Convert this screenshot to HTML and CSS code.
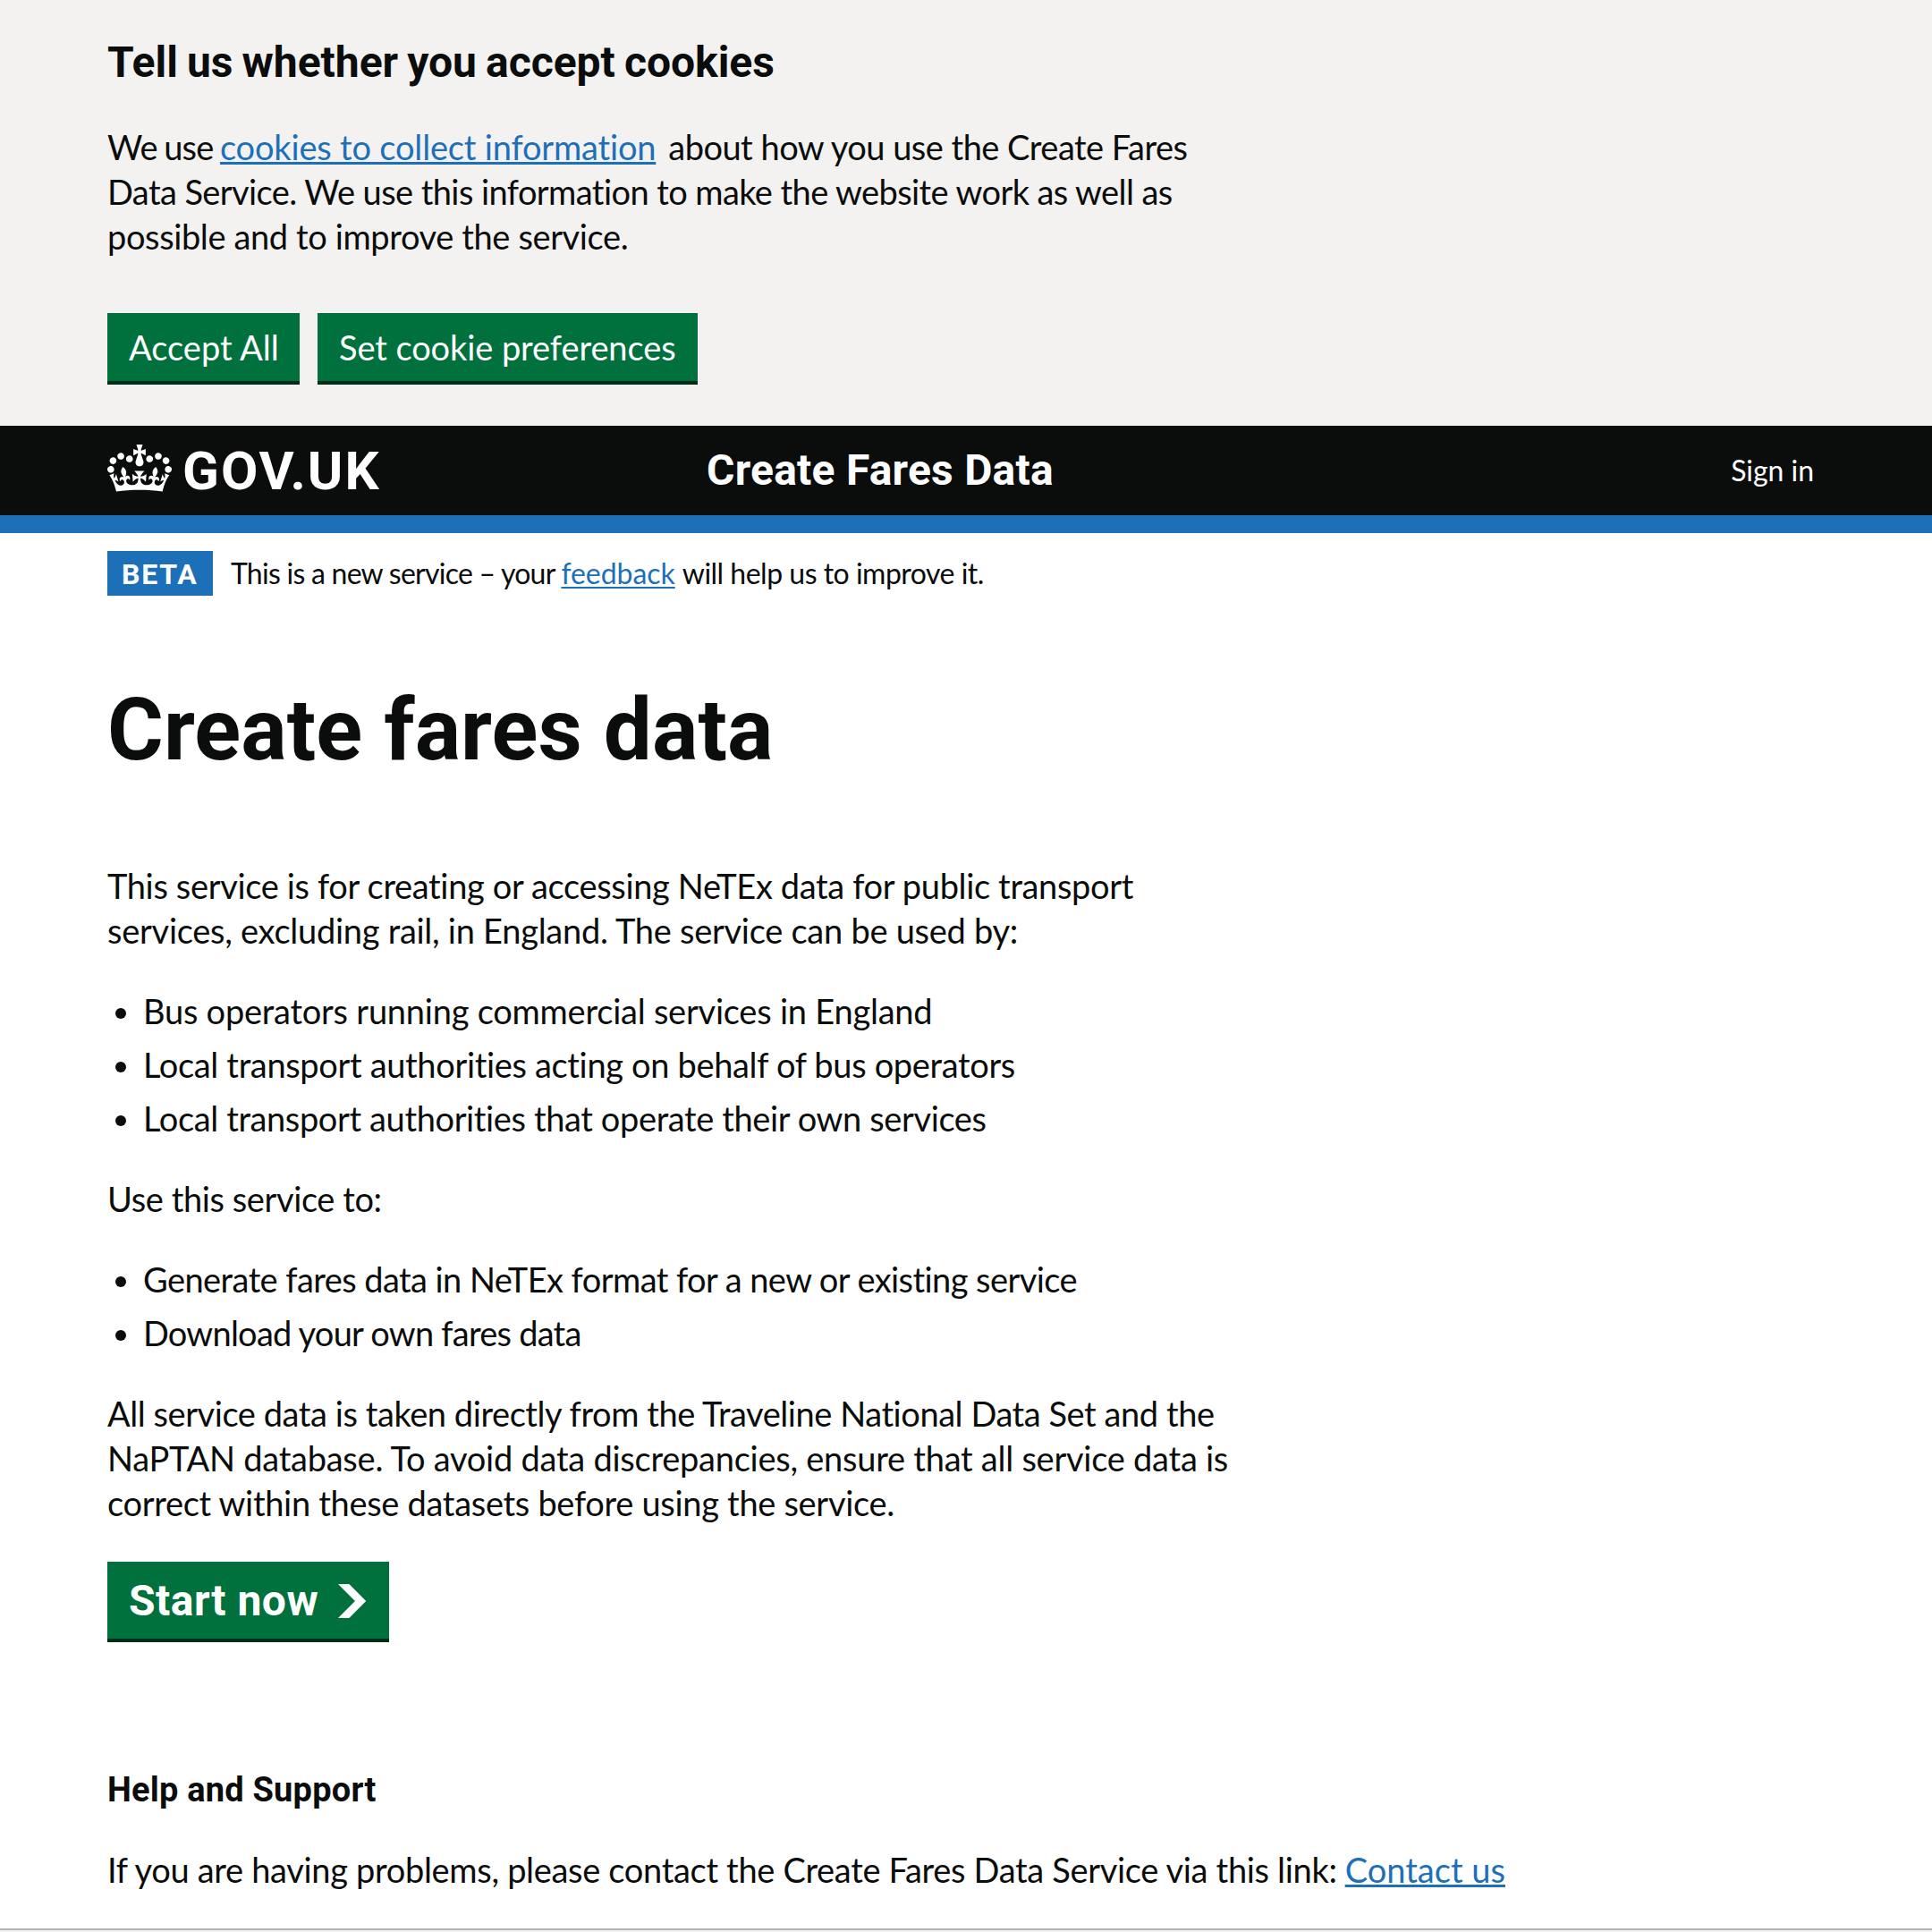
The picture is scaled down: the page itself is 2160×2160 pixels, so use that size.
FILE: index.html
```html
<!DOCTYPE html>
<html lang="en">
<head>
<meta charset="utf-8">
<title>Create Fares Data</title>
<link rel="stylesheet" href="styles.css">
</head>
<body>
<section class="cookie-banner">
  <h2 class="cookie-title">Tell us whether you accept cookies</h2>
  <p class="body cookie-text"><span class="line"><span class="t-we">We use </span><a class="link t-cookies" href="#">cookies to collect information</a><span class="t-about">about how you use the Create Fares</span></span>
    <span class="line t-data">Data Service. We use this information to make the website work as well as</span>
    <span class="line t-possible">possible and to improve the service.</span></p>
  <div class="cookie-actions">
    <button class="button t-accept">Accept All</button>
    <button class="button button-wide t-set">Set cookie preferences</button>
  </div>
</section>

<header class="header">
  <a class="logo" href="#">
    <svg class="crown" viewBox="0 0 132 97" width="72" height="53" aria-hidden="true"><path fill="currentColor" fill-rule="evenodd" d="M25 30.2c3.5 1.5 7.7-.2 9.1-3.7 1.5-3.6-.2-7.8-3.9-9.2-3.6-1.4-7.6.3-9.1 3.9-1.4 3.5.3 7.5 3.9 9zM9 39.5c3.6 1.5 7.8-.2 9.2-3.7 1.5-3.6-.2-7.8-3.9-9.1-3.6-1.5-7.6.2-9.1 3.8-1.4 3.5.3 7.5 3.8 9zM4.4 57.2c3.5 1.5 7.7-.2 9.1-3.8 1.5-3.6-.2-7.7-3.9-9.1-3.5-1.5-7.6.3-9.1 3.8-1.4 3.5.3 7.6 3.9 9.1zm38.3-21.4c3.5 1.5 7.7-.2 9.1-3.8 1.5-3.6-.2-7.7-3.9-9.1-3.6-1.5-7.6.3-9.1 3.8-1.3 3.6.4 7.7 3.9 9.1zm64.4-5.6c-3.6 1.5-7.8-.2-9.1-3.7-1.5-3.6.2-7.8 3.8-9.2 3.6-1.4 7.7.3 9.2 3.9 1.3 3.5-.4 7.5-3.9 9zm15.9 9.3c-3.6 1.5-7.7-.2-9.1-3.7-1.5-3.6.2-7.8 3.7-9.1 3.6-1.5 7.7.2 9.2 3.8 1.5 3.5-.3 7.5-3.8 9zm4.7 17.7c-3.6 1.5-7.8-.2-9.2-3.8-1.5-3.6.2-7.7 3.9-9.1 3.6-1.5 7.7.3 9.2 3.8 1.3 3.5-.4 7.6-3.9 9.1zM89.3 35.8c-3.6 1.5-7.8-.2-9.2-3.8-1.4-3.6.2-7.7 3.9-9.1 3.6-1.5 7.7.3 9.2 3.8 1.4 3.6-.3 7.7-3.9 9.1zM69.7 17.7l8.9 4.7V9.3l-8.9 2.8c-.2-.3-.5-.6-.9-.9L72.4 0H59.6l3.5 11.2c-.3.3-.6.5-.9.9l-8.8-2.8v13.1l8.8-4.7c.3.3.6.7.9.9l-5 15.4v.1c-.2.8-.4 1.6-.4 2.4 0 4.1 3.1 7.5 7 8.1h.2c.3 0 .7.1 1 .1.4 0 .7 0 1-.1h.2c4-.6 7.1-4.1 7.1-8.1 0-.8-.1-1.7-.4-2.4V34l-5.1-15.4c.4-.2.7-.6 1-.9zM66 92.8c16.9 0 32.8 1.1 47.1 3.2 4-16.9 8.9-26.7 14-33.5l-9.6-3.4c1 4.9 1.1 7.2 0 10.2-1.5-1.4-3-4.3-4.2-8.7L108.6 76c2.8-2 5-3.2 7.5-3.3-4.4 9.4-10 11.9-13.6 11.2-4.3-.8-6.3-4.6-5.6-7.9 1-4.7 5.7-5.9 8-.5 4.3-8.7-3-11.4-7.6-8.8 7.1-7.2 7.9-13.5 2.1-21.1-8 6.1-8.1 12.3-4.5 20.8-4.7-5.4-12.1-2.5-9.5 6.2 3.4-5.2 7.9-2 7.2 3.1-.6 4.3-6.4 7.8-13.5 7.2-10.3-.9-10.9-8-11.2-13.8 2.5-.5 7.1 1.8 11 7.3L80.2 60c-4.1 4.4-8 5.3-12.3 5.4 1.4-4.4 8-11.6 8-11.6H55.5s6.4 7.2 7.9 11.6c-4.2-.1-8-1-12.3-5.4l1.4 16.4c3.9-5.5 8.5-7.7 10.9-7.3-.3 5.8-.9 12.8-11.1 13.8-7.2.6-12.9-2.9-13.5-7.2-.7-5 3.8-8.3 7.1-3.1 2.7-8.7-4.6-11.6-9.4-6.2 3.7-8.5 3.6-14.7-4.6-20.8-5.8 7.6-5 13.9 2.2 21.1-4.7-2.6-11.9.1-7.7 8.8 2.3-5.5 7.1-4.2 8.1.5.7 3.3-1.3 7.1-5.7 7.9-3.5.7-9-1.8-13.5-11.2 2.5.1 4.7 1.3 7.5 3.3l-4.7-15.4c-1.2 4.4-2.7 7.2-4.3 8.7-1.1-3-.9-5.3 0-10.2l-9.5 3.4c5 6.9 9.9 16.7 14 33.5 14.8-2.1 30.8-3.2 47.7-3.2z"/></svg>
    <span class="logo-text">GOV.UK</span>
  </a>
  <a class="service-name" href="#">Create Fares Data</a>
  <a class="sign-in" href="#">Sign in</a>
</header>

<div class="phase">
  <strong class="tag">BETA</strong>
  <span class="phase-text"><span class="t-new">This is a new service – your </span><a class="link link-small t-feedback" href="#">feedback</a><span class="t-will">will help us to improve it.</span></span>
</div>

<main class="main">
  <h1 class="title">Create fares data</h1>
  <p class="body"><span class="line t-this">This service is for creating or accessing NeTEx data for public transport</span>
    <span class="line t-services">services, excluding rail, in England. The service can be used by:</span></p>
  <ul class="body list">
    <li class="item t-bus">Bus operators running commercial services in England</li>
    <li class="item t-local">Local transport authorities acting on behalf of bus operators</li>
    <li class="item t-own">Local transport authorities that operate their own services</li>
  </ul>
  <p class="body t-use">Use this service to:</p>
  <ul class="body list">
    <li class="item t-generate">Generate fares data in NeTEx format for a new or existing service</li>
    <li class="item t-download">Download your own fares data</li>
  </ul>
  <p class="body"><span class="line t-all">All service data is taken directly from the Traveline National Data Set and the</span>
    <span class="line t-naptan">NaPTAN database. To avoid data discrepancies, ensure that all service data is</span>
    <span class="line t-correct">correct within these datasets before using the service.</span></p>
  <a class="start" href="#">Start now
    <svg class="chevron" viewBox="0 0 33 40" width="31.35" height="38" aria-hidden="true"><path fill="currentColor" d="M0 0h13l20 20-20 20H0l20-20z"/></svg>
  </a>
  <h2 class="help">Help and Support</h2>
  <p class="body contact"><span class="t-if">If you are having problems, please contact the Create Fares Data Service via this link:</span><a class="link t-contact" href="#">Contact us</a></p>
</main>
<footer class="footer"></footer>
</body>
</html>
```

FILE: styles.css
```css
* { box-sizing: border-box; }
html { height: 2160px; overflow: hidden; }
body { margin: 0; height: 2160px; overflow: hidden; display: flex; flex-direction: column; background: #fff; color: #0b0c0c; font-family: Lato, "Liberation Sans", sans-serif; font-variant-ligatures: none; white-space: nowrap; }
h1, h2, p, ul { margin: 0; padding: 0; }
a { color: inherit; text-decoration: none; }

.body { font-size: 38px; line-height: 50px; }
.line { display: block; }
.link { color: #1d70b8; text-decoration: underline; text-decoration-thickness: 3px; text-underline-offset: 2px; text-decoration-skip-ink: none; }
.link-small { text-decoration-thickness: 2px; text-underline-offset: 3px; }

.cookie-banner { flex: none; height: 476px; padding: 40px 120px 0; background: #f3f2f1; }
.cookie-title { font: bold 48px/60px Roboto, sans-serif; letter-spacing: -.02px; word-spacing: -1.8px; }
.cookie-text { margin-top: 39px; }
.cookie-actions { display: flex; gap: 20px; margin-top: 61px; }
.button { width: 215px; height: 76px; padding: 1px 0 1px 24px; border: 0; background: #00703c; box-shadow: 0 4px 0 #002d18; color: #fff; font: 38px/74px Lato, sans-serif; text-align: left; white-space: nowrap; }
.button-wide { width: 425px; }

.header { flex: none; height: 120px; padding: 0 120px; display: flex; align-items: flex-start; border-bottom: 20px solid #1d70b8; background: #0b0c0c; color: #fff; }
.logo { display: flex; width: 670px; }
.crown { flex: none; margin-top: 21px; }
.logo-text { margin: 16px 0 0 12px; font: bold 60px/70px Roboto, sans-serif; letter-spacing: 2px; }
.service-name { margin-top: 20px; font: bold 48px/60px Roboto, sans-serif; letter-spacing: .235px; }
.sign-in { margin: 30px 12px 0 auto; font-size: 32px; line-height: 40px; letter-spacing: -.04px; }

.phase { flex: none; height: 70px; padding: 20px 120px 0; display: flex; gap: 20px; }
.tag { width: 118px; height: 50px; padding: 1px 0 0 16px; background: #1d70b8; color: #fff; font: bold 32px/50px Roboto, sans-serif; letter-spacing: 1.8px; }
.phase-text { padding-top: 5px; font-size: 32px; line-height: 40px; white-space: pre; }

.main { flex: none; height: 1490px; padding: 100px 120px 0; }
.title { margin-bottom: 99px; font: bold 96px/100px Roboto, sans-serif; letter-spacing: .1px; }
.list { display: flex; flex-direction: column; gap: 10px; margin: 40px 0; list-style: none; }
.item { display: flex; align-items: center; }
.item::before { content: ""; width: 12px; height: 12px; margin: 5px 19px 0 9px; border-radius: 50%; background: #0b0c0c; }
.start { display: flex; width: 315px; height: 86px; margin-top: 41px; padding: 14px 0 0 24px; background: #00703c; box-shadow: 0 4px 0 #002d18; color: #fff; font: bold 48px/60px Roboto, sans-serif; letter-spacing: .5px; }
.chevron { flex: none; margin: 11px 26px 0 auto; }
.help { margin: 144px 0 39px; font: bold 38px/50px Roboto, sans-serif; letter-spacing: .2px; }
.contact { display: flex; }
.footer { flex: 1; border-top: 2px solid #b1b4b6; background: #f3f2f1; }

/* Tracking per line of copy */
.t-we { letter-spacing: -.75px; word-spacing: -1.6px; }
.t-cookies { letter-spacing: -.18px; }
.t-about { margin-left: 14px; letter-spacing: -.515px; }
.t-data { letter-spacing: -.58px; }
.t-possible { letter-spacing: -.38px; }
.t-accept { letter-spacing: .011px; }
.t-set { letter-spacing: -.09px; }
.t-new { letter-spacing: -.75px; }
.t-feedback { letter-spacing: -.05px; }
.t-will { margin-left: 8px; letter-spacing: -.5px; }
.t-this { letter-spacing: -.35px; }
.t-services { letter-spacing: -.27px; }
.t-bus { letter-spacing: -.235px; }
.t-local { letter-spacing: -.34px; }
.t-own { letter-spacing: -.378px; }
.t-use { letter-spacing: -.4px; }
.t-generate { letter-spacing: -.567px; }
.t-download { letter-spacing: -.76px; }
.t-all { letter-spacing: -.435px; }
.t-naptan { letter-spacing: -.25px; }
.t-correct { letter-spacing: -.308px; }
.t-if { margin-right: 9px; letter-spacing: -.32px; }
.t-contact { letter-spacing: .02px; }
```
